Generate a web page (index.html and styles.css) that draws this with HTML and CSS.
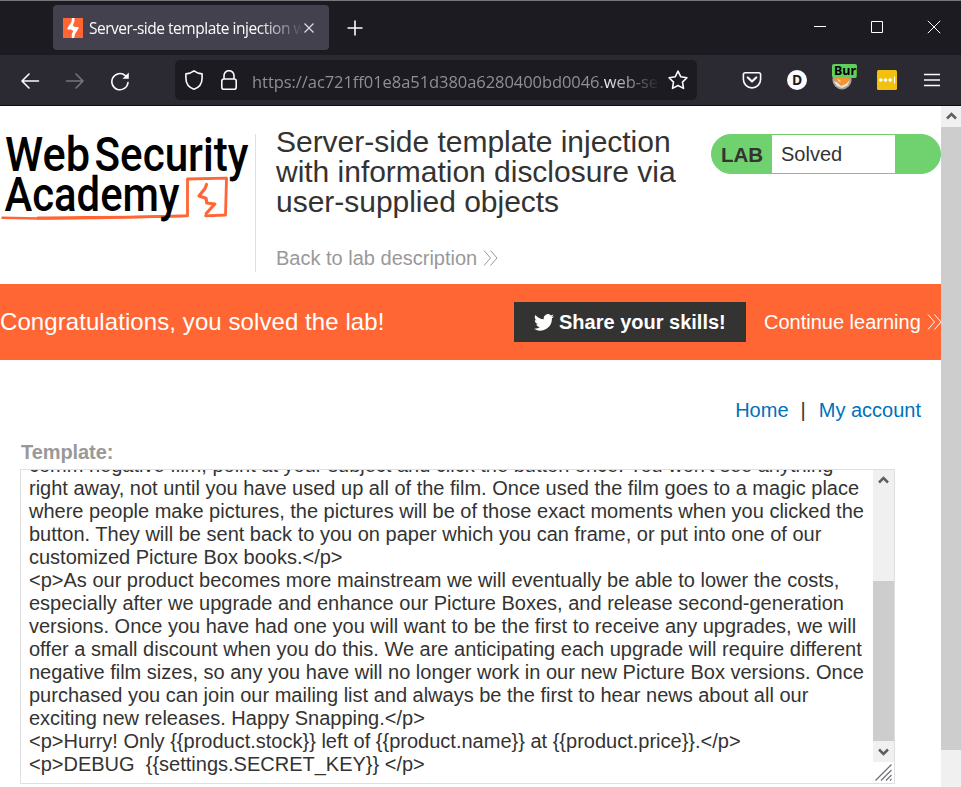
FILE: index.html
```html
<!DOCTYPE html>
<html lang="en">
<head>
<meta charset="utf-8">
<title>Server-side template injection with information disclosure</title>
<link rel="stylesheet" href="styles.css">
</head>
<body>
<header class="tabs">
  <div class="tab">
    <svg class="favicon" width="20" height="20" viewBox="0 0 20 20"><path fill="#ff6633" d="M0 0h20v20H0z"/><path fill="#fff" d="M9 0h2.500v3L9.800 7.500 12 9h3.500v1.500L12 16l-.8 4H8.800v-4l1.500-3-2.300-1.500H4.500V9.800L8.500 4z"/></svg>
    <span class="tab-title">Server-side template injection with</span>
    <svg class="tab-close" width="12" height="12" viewBox="0 0 12 12"><path d="M1.500 1.500l9 9M10.500 1.500l-9 9"/></svg>
  </div>
  <svg class="plus" width="16" height="16" viewBox="0 0 16 16"><path d="M8 .5v15M.5 8h15"/></svg>
  <div class="window-buttons">
    <svg width="14" height="14" viewBox="0 0 14 14"><path d="M1 6.500h12"/></svg>
    <svg width="14" height="14" viewBox="0 0 14 14"><path d="M1.500 1.500h11v11h-11z"/></svg>
    <svg width="14" height="14" viewBox="0 0 14 14"><path d="M.8.8l12.400 12.400M13.200.8L.8 13.200"/></svg>
  </div>
</header>
<nav class="toolbar">
  <div class="nav-icons">
    <svg width="20" height="20" viewBox="0 0 20 20"><path d="M18.500 10H2M9 3l-7 7 7 7"/></svg>
    <svg class="dim" width="20" height="20" viewBox="0 0 20 20"><path d="M1.500 10H18M11 3l7 7-7 7"/></svg>
    <svg width="20" height="20" viewBox="0 0 20 20"><path d="M18 11.500A8.100 8.100 0 1 1 15.300 4.600"/><path d="M18.800 1.500v6.300h-6.300z" fill="#fbfbfe" stroke="none"/></svg>
  </div>
  <div class="address">
    <svg width="20" height="20" viewBox="0 0 20 20"><path d="M10 .9C7.800 2.600 5 3.600 1.900 3.900V8c0 5 3 9.500 8.100 11.200C15.100 17.500 18.100 13 18.100 8V3.900C15 3.600 12.200 2.600 10 .9z"/></svg>
    <svg class="lock" width="16" height="20" viewBox="0 0 16 20"><path d="M3 9V5.700a5 5 0 0 1 10 0V9M2.800 9h10.400a2 2 0 0 1 2 2v6.200a2 2 0 0 1-2 2H2.800a2 2 0 0 1-2-2V11a2 2 0 0 1 2-2z"/></svg>
    <span class="url">https://ac721ff01e8a51d380a6280400bd0046.<b>web-security</b></span>
    <svg class="star" width="20" height="20" viewBox="0 0 20 20"><path d="M10 1.200l2.800 5.600 6.100.9-4.400 4.400 1 6.300L10 15.500l-5.500 2.900 1-6.300L1.100 7.700l6.100-.9z"/></svg>
  </div>
  <div class="extensions">
    <svg width="20" height="20" viewBox="0 0 20 20"><path d="M3.200 2.800h13.600a1.800 1.800 0 0 1 1.800 1.800v4.700a8.600 8.600 0 0 1-17.200 0V4.600a1.800 1.800 0 0 1 1.800-1.800z"/><path d="M5.800 7.500L10 11.500l4.200-4" stroke-width="2.200"/></svg>
    <span class="darkness">D</span>
    <div class="proxy">
      <svg width="20" height="20" viewBox="0 0 20 20"><circle cx="10" cy="9.800" r="9.600" fill="#a7a29e" stroke="none"/><path d="M2 6l6 2 4-1 6-2-1 8-5 4-5-1-4-4z" fill="#f7922d" stroke="none"/><path d="M1.500 11l4 1.500L9 16l5-2 4-4-2.500 5.500-5.500 2.500-5-2zM5 8.500l4 2.500-2 1z" fill="#e8e4e0" stroke="none"/></svg>
      <span class="proxy-badge">Burp</span>
    </div>
    <svg width="20" height="20" viewBox="0 0 20 20"><rect width="20" height="20" rx="1.500" fill="#f2c10f" stroke="none"/><g fill="#fff" stroke="none"><circle cx="3.800" cy="10" r="1.800"/><circle cx="8.500" cy="10" r="1.800"/><circle cx="13.200" cy="10" r="1.800"/><path d="M17 6.500h1v7h-1z"/></g></svg>
    <svg width="16" height="16" viewBox="0 0 16 16"><path d="M.5 2.500h15M.5 8h15M.5 13.500h15"/></svg>
  </div>
</nav>
<div class="viewport">
  <main>
    <section class="lab-header">
      <svg class="logo" width="255" height="100" viewBox="0 0 255 100">
        <g fill="none" stroke="#ff6633" stroke-linecap="round" stroke-linejoin="round"><path d="M2.500 83.800l36 .8 60-.6 89-2.200" stroke-width="2.500"/><path d="M187.500 81.500V45l39-.8-1 36.800-20 .8M38 84c70-.8 100-.8 149-2.200" stroke-width="2.800"/><path d="M206.500 50.500l-1.500 4-6 7.500 7 2.200.8 4.800 8 1-8.600 9.500" stroke-width="3.200"/></g>
        <text class="logo-text" y="36.500"><tspan x="5" textLength="85" lengthAdjust="spacingAndGlyphs">Web</tspan> <tspan x="94.500" textLength="154" lengthAdjust="spacingAndGlyphs">Security</tspan></text>
        <text class="logo-text" x="4.500" y="77" textLength="175" lengthAdjust="spacingAndGlyphs">Academy</text>
      </svg>
      <div class="title-block">
        <h2>Server-side template injection<br>with information disclosure via<br>user-supplied objects</h2>
        <a class="back">Back to lab description <svg width="15" height="16" viewBox="0 0 15 16"><path d="M1 .5L7.500 8 1 15.500M7.500.5L14 8l-6.500 7.500"/></svg></a>
      </div>
      <div class="status"><b>LAB</b><span>Solved</span></div>
    </section>
    <section class="banner">
      <h4>Congratulations, you solved the lab!</h4>
      <a class="share"><svg width="20" height="17" viewBox="0 0 24 20"><path fill="#fff" d="M24 2.400a10 10 0 0 1-2.800.8A5 5 0 0 0 23.300.5a10 10 0 0 1-3.100 1.200A4.900 4.900 0 0 0 11.800 6.200 14 14 0 0 1 1.700 1.100a4.900 4.900 0 0 0 1.500 6.500A5 5 0 0 1 1 7v.1a4.900 4.900 0 0 0 3.900 4.800 5 5 0 0 1-2.200.1 4.900 4.900 0 0 0 4.600 3.400A10 10 0 0 1 0 17.500 14 14 0 0 0 21.500 5 10 10 0 0 0 24 2.400z"/></svg>Share your skills!</a>
      <a class="continue">Continue learning <svg width="15" height="16" viewBox="0 0 15 16"><path d="M1 .5L7.500 8 1 15.500M7.500.5L14 8l-6.500 7.500"/></svg></a>
    </section>
    <nav class="links"><a>Home</a><i>|</i><a>My account</a></nav>
    <label class="label">Template:</label>
    <div class="editor">
      <pre class="source">comm negative film, point at your subject and click the button once. You won't see anything
right away, not until you have used up all of the film. Once used the film goes to a magic place
where people make pictures, the pictures will be of those exact moments when you clicked the
button. They will be sent back to you on paper which you can frame, or put into one of our
customized Picture Box books.&lt;/p&gt;
&lt;p&gt;As our product becomes more mainstream we will eventually be able to lower the costs,
especially after we upgrade and enhance our Picture Boxes, and release second-generation
versions. Once you have had one you will want to be the first to receive any upgrades, we will
offer a small discount when you do this. We are anticipating each upgrade will require different
negative film sizes, so any you have will no longer work in our new Picture Box versions. Once
purchased you can join our mailing list and always be the first to hear news about all our
exciting new releases. Happy Snapping.&lt;/p&gt;
&lt;p&gt;Hurry! Only {{product.stock}} left of {{product.name}} at {{product.price}}.&lt;/p&gt;
&lt;p&gt;DEBUG  {{settings.SECRET_KEY}} &lt;/p&gt;</pre>
      <div class="editor-side">
        <div class="editor-scroll">
          <svg width="21" height="21" viewBox="0 0 21 21"><path d="M6 12.500L10.500 8l4.500 4.500"/></svg>
          <div class="editor-thumb"></div>
          <svg width="21" height="21" viewBox="0 0 21 21"><path d="M6 8.500l4.500 4.500L15 8.500"/></svg>
        </div>
        <svg class="grip" width="21" height="21" viewBox="0 0 21 21"><path d="M2.500 18.500l16-16M8 18.500L18.500 8M13 18.500l5.500-5.500M17 18.500l1.500-1.500"/></svg>
      </div>
    </div>
  </main>
  <aside class="page-scroll">
    <svg width="20" height="21" viewBox="0 0 20 21"><path d="M6 12.500L10.500 8l4.500 4.500"/></svg>
    <div class="page-thumb"></div>
  </aside>
</div>
</body>
</html>
```

FILE: styles.css
```css
* { box-sizing: border-box; }
body { margin: 0; width: 961px; height: 787px; overflow: hidden; background: #fff; color: #333332; font: 20px/23px "Liberation Sans", Arial, sans-serif; }
svg { display: block; flex: none; }
h2, h4, pre { margin: 0; font-weight: 400; }

.tabs { height: 55px; background: #1c1b22; border-top: 1px solid #77777a; display: flex; align-items: flex-start; padding: 4px 20px 0 53px; }
.tab { width: 276px; height: 45px; border-radius: 4px; background: #42414d; display: flex; align-items: center; padding-left: 10px; }
.tab-title { width: 213px; margin-left: 6px; overflow: hidden; white-space: nowrap; color: #fbfbfe; font: 15.5px/24px "Open Sans", "Noto Sans", sans-serif; letter-spacing: -0.48px; -webkit-mask-image: linear-gradient(to right, #000 170px, transparent 215px); mask-image: linear-gradient(to right, #000 170px, transparent 215px); }
.tab-close { margin-left: 1px; stroke: #dedee2; stroke-width: 1.2; }
.plus { margin: 15px 0 0 18px; stroke: #fbfbfe; stroke-width: 1.6; }
.window-buttons { margin: 15px 0 0 auto; display: flex; gap: 43px; fill: none; stroke: #fff; stroke-width: 1; }

.toolbar { height: 51px; background: #2b2a33; border-bottom: 1px solid #0c0c0d; display: flex; align-items: flex-start; padding-top: 5px; }
.toolbar svg { fill: none; stroke: #fbfbfe; stroke-width: 1.6; stroke-linecap: round; stroke-linejoin: round; }
.nav-icons { width: 175px; height: 40px; padding: 1px 0 0 20px; display: flex; align-items: center; gap: 25px; }
.nav-icons .dim { stroke: #76757c; }
.address { width: 522px; height: 40px; border-radius: 5px; background: #1c1b22; display: flex; align-items: center; padding-left: 9px; }
.lock { margin-left: 17px; }
.url { width: 408px; margin-left: 15px; overflow: hidden; white-space: nowrap; color: #8f8f96; font: 16.5px/24px "Open Sans", "Noto Sans", sans-serif; letter-spacing: -0.06px; padding-top: 3px; -webkit-mask-image: linear-gradient(to right, #000 350px, transparent 408px); mask-image: linear-gradient(to right, #000 350px, transparent 408px); }
.url b { color: #fbfbfe; font-weight: 400; }
.star { margin-left: 8px; }
.extensions { height: 40px; margin-left: 45px; display: flex; align-items: center; gap: 25px; }
.extensions > :last-child { margin-left: 2px; }
.darkness { width: 20px; height: 20px; border-radius: 50%; background: #fbfbfe; color: #1c1b22; font: 700 14px/20px "Noto Sans", sans-serif; text-align: center; }
.proxy { position: relative; width: 20px; height: 20px; }
.proxy-badge { position: absolute; left: 0; top: -6px; width: 25px; height: 14px; border-radius: 2px; background: #60cf60; color: #000; font: 700 12.5px/13px "Noto Sans", sans-serif; padding-left: 2px; overflow: hidden; }

.viewport { display: flex; height: 681px; }
main { width: 941px; height: 681px; overflow: hidden; }
.lab-header { height: 178px; display: flex; padding-top: 28px; }
.logo { overflow: visible; }
.logo-text { font: 500 48px Roboto, sans-serif; fill: #000; }
.title-block { width: 455px; height: 138px; border-left: 1px solid #e0e0df; padding-left: 20px; }
.title-block h2 { font-size: 30px; line-height: 30px; letter-spacing: -0.02px; margin-top: -7px; white-space: nowrap; }
.back, .continue { display: flex; align-items: center; gap: 6px; white-space: nowrap; }
.back { margin-top: 30px; color: #999; }
.back svg { margin-top: -2px; }
.back svg, .continue svg { fill: none; stroke: currentColor; stroke-width: 1; }
.status { width: 230px; height: 40px; margin-left: 1px; border: 1px solid #70d16f; border-radius: 20px; background: #70d16f; display: flex; line-height: 38px; overflow: hidden; }
.status b { width: 60px; padding-left: 9px; font-size: 20.5px; line-height: 40px; }
.status span { width: 123px; padding-left: 9px; background: #fff; }
.banner { height: 76px; background: #f63; color: #fff; display: flex; align-items: center; }
.banner h4 { width: 514px; flex: none; font-size: 24px; line-height: 28px; letter-spacing: 0.08px; white-space: nowrap; }
.share { width: 232px; flex: none; height: 40px; background: #333332; font-weight: 700; display: flex; align-items: center; gap: 5px; padding-left: 20px; white-space: nowrap; }
.continue { margin-left: 18px; }
.links { margin-top: 39px; height: 23px; padding-right: 20px; display: flex; justify-content: flex-end; color: #0071bb; }
.links a { white-space: nowrap; }
.links i { color: #333332; font-style: normal; margin: 0 13px 0 12px; }
.label { display: block; margin: 19px 0 0 21px; height: 23px; color: #999; font-weight: 700; letter-spacing: -0.08px; }
.editor { width: 875px; height: 315px; margin: 5px 0 0 20px; border: 1px solid #dfdfdf; display: flex; }
.source { width: 852px; height: 313px; overflow: hidden; padding-left: 8px; font: inherit; display: flex; align-items: flex-end; padding-bottom: 7px; }
.editor-side { width: 21px; height: 313px; }
.editor-scroll { height: 292px; background: #f0f0f0; display: flex; flex-direction: column; }
.editor-scroll svg, .page-scroll svg { fill: none; stroke: #606060; stroke-width: 2.6; }
.editor-thumb { height: 160px; margin-top: 90px; background: #cdcdcd; }
.grip { fill: none; stroke: #6f6f78; stroke-width: 1.2; }
.page-scroll { width: 20px; background: #f0f0f0; }
.page-thumb { height: 623px; background: #cdcdcd; }
```
